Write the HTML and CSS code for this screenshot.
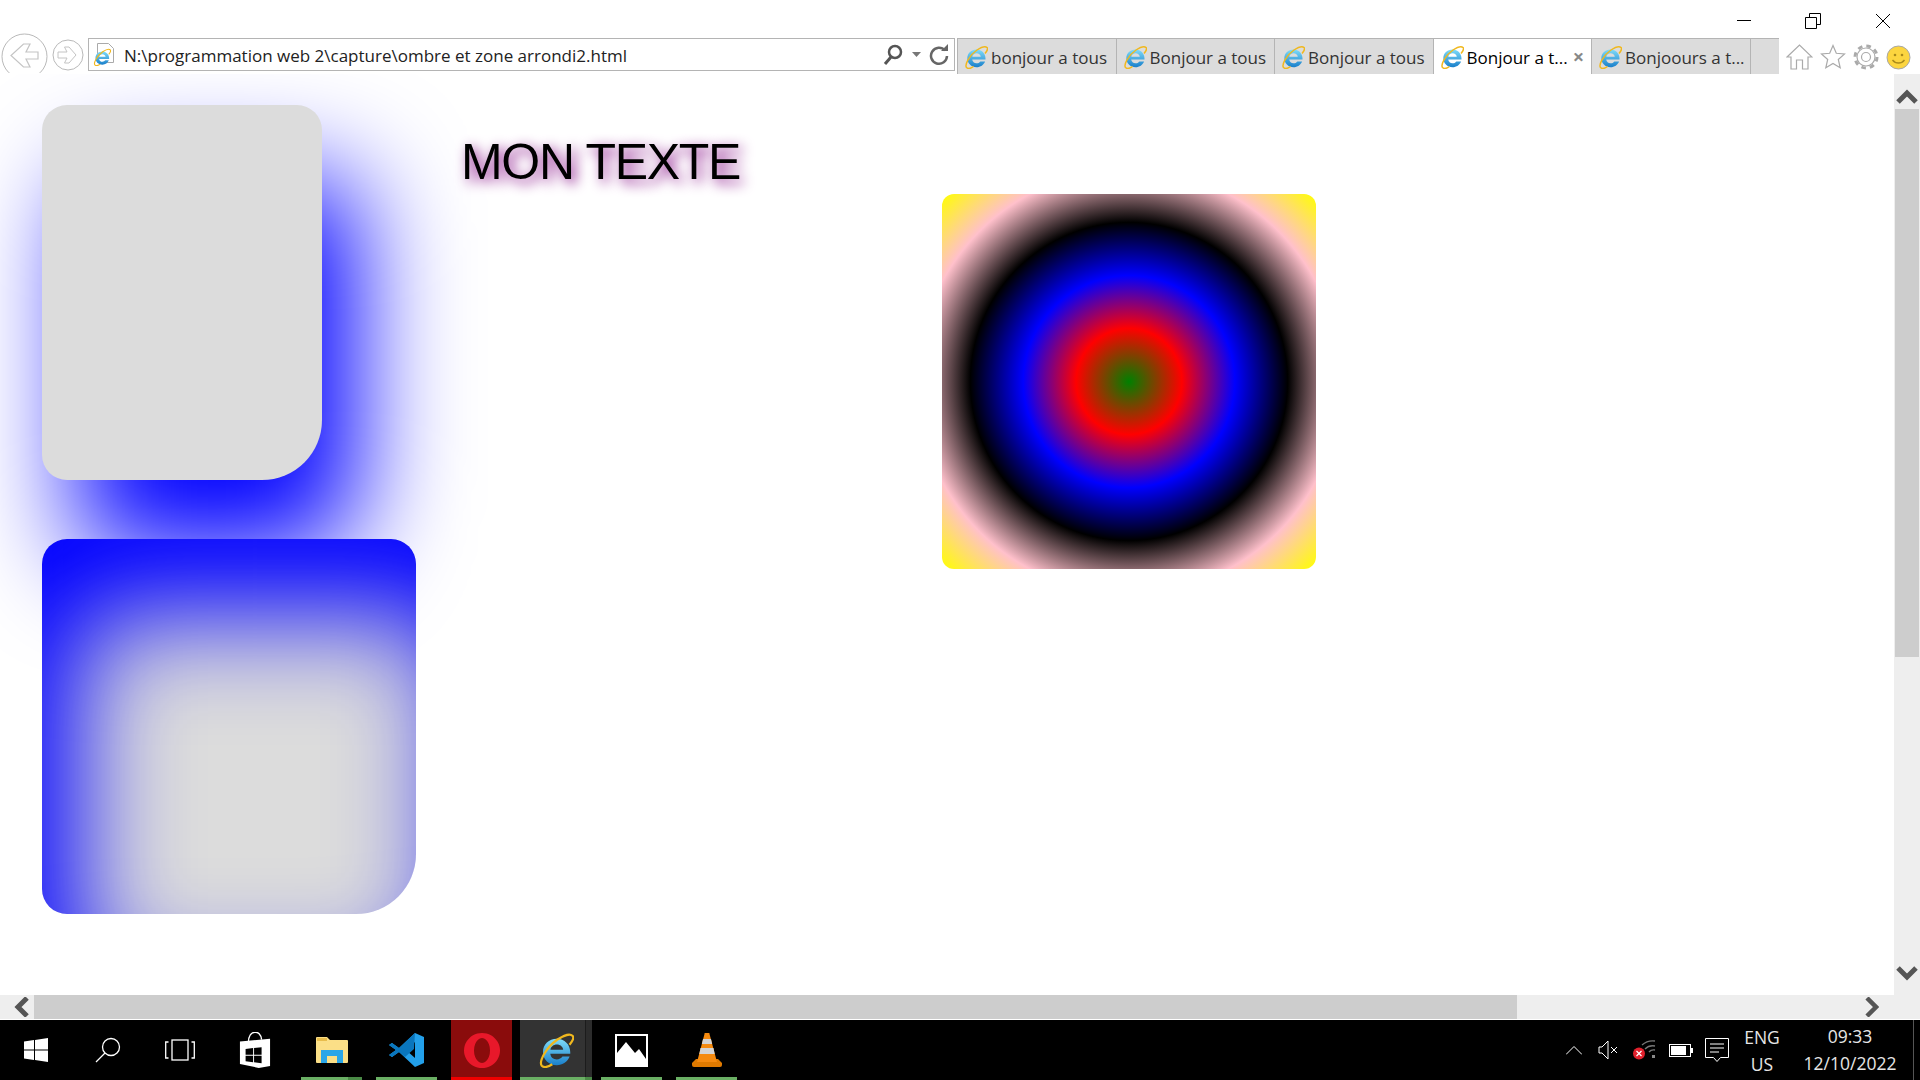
FILE: index.html
```html
<!DOCTYPE html>
<html lang="fr">

<head>
    <meta charset="UTF-8" />
    <title>Bonjour a tous</title>
    <link rel="stylesheet" href="styles.css">
</head>

<body>
    <svg class="defs" width="0" height="0">
        <defs>
            <linearGradient id="ie-blue" x1="0" y1="0" x2="0" y2="1">
                <stop offset="0" stop-color="#7fdcf9" />
                <stop offset="1" stop-color="#1a80cb" />
            </linearGradient>
        </defs>
        <symbol id="ie" viewBox="0 0 24 24">
            <path d="M21.500 14.500H8.200c.3 2.400 2 3.800 4.300 3.800 1.600 0 3-.7 3.800-1.900h4.800c-1.300 3.400-4.600 5.800-8.600 5.800-5.200 0-9.200-3.900-9.200-8.900S7.300 4.500 12.500 4.500s9 3.900 9 9zM8.300 11.800h8.500c-.3-2.100-2-3.500-4.200-3.500s-4 1.400-4.300 3.500z" fill="url(#ie-blue)" fill-rule="evenodd" />
            <path d="M2.500 22.500C.5 20 5 10.500 13 5c4.500-3 8.500-4 10-2.500 1.200 1.200.1 3.500-2 6M2.500 22.500c1.500 1.500 4.500.8 7-1" fill="none" stroke="#f0b81e" stroke-width="1.500" />
        </symbol>
    </svg>

    <header class="window-bar">
        <div class="controls">
            <svg width="14" height="14" viewBox="0 0 14 14"><path d="M0 7.500h14" stroke="#000" /></svg>
            <svg width="16" height="16" viewBox="0 0 16 16"><path d="M.5 4.500h11v11H.500zM4.500 4V.5h11v11H12" fill="none" stroke="#000" /></svg>
            <svg width="16" height="16" viewBox="0 0 16 16"><path d="M1 1l14 14M15 1L1 15" stroke="#000" /></svg>
        </div>
    </header>

    <nav class="toolbar">
        <div class="nav-buttons">
            <svg class="back" width="47" height="47" viewBox="0 0 47 47">
                <circle cx="23.500" cy="23.500" r="22.500" fill="#fff" stroke="#b9b9b9" />
                <path d="M37 19H25l4-8h-6.500L10 22.500 22.500 34H29l-4-8h12z" fill="none" stroke="#c4c4c4" stroke-width="1.200" />
            </svg>
            <svg class="forward" width="32" height="32" viewBox="0 0 32 32">
                <circle cx="16" cy="16" r="15" fill="#fff" stroke="#b9b9b9" />
                <path d="M6 13h9l-2.500-5H17l7 8-7 8h-4.500L15 19H6z" fill="none" stroke="#c4c4c4" />
            </svg>
        </div>
        <div class="address">
            <svg class="page-icon" width="22" height="26" viewBox="0 0 22 26">
                <path d="M4.500 1.500h11l5 5v14h-16z" fill="#fff" stroke="#aaa" />
                <use href="#ie" x="0" y="6" width="18" height="18" />
            </svg>
            <span class="url">N:\programmation web 2\capture\ombre et zone arrondi2.html</span>
            <svg width="22" height="22" viewBox="0 0 22 22"><circle cx="13" cy="8" r="6" fill="none" stroke="#555" stroke-width="2.500" /><path d="M9 13l-6 7" stroke="#555" stroke-width="3" /></svg>
            <svg class="caret" width="9" height="5" viewBox="0 0 9 5"><path d="M0 0h9L4.500 5z" fill="#777" /></svg>
            <svg width="20" height="22" viewBox="0 0 20 22"><path d="M16 6.500a8 8 0 1 0 2 5.500" fill="none" stroke="#666" stroke-width="2.500" /><path d="M12 7h7V0z" fill="#666" /></svg>
        </div>
        <div class="tabs">
            <div class="tab"><svg width="24" height="24"><use href="#ie" /></svg><span>bonjour a tous</span></div>
            <div class="tab"><svg width="24" height="24"><use href="#ie" /></svg><span>Bonjour a tous</span></div>
            <div class="tab"><svg width="24" height="24"><use href="#ie" /></svg><span>Bonjour a tous</span></div>
            <div class="tab active"><svg width="24" height="24"><use href="#ie" /></svg><span>Bonjour a t...</span><b class="tab-close">×</b></div>
            <div class="tab"><svg width="24" height="24"><use href="#ie" /></svg><span>Bonjoours a t...</span></div>
            <div class="tab new-tab"></div>
        </div>
        <div class="tools">
            <svg width="27" height="26" viewBox="0 0 27 26"><path d="M1 13L13.500 1 26 13h-4v12h-5.500v-9h-6v9H5V13z" fill="none" stroke="#aaa" stroke-width="1.200" /></svg>
            <svg width="26" height="26" viewBox="0 0 26 26"><path d="M13 1.500l3.300 7.800 8.200.7-6.200 5.500 1.900 8.300-7.200-4.400-7.200 4.400 1.900-8.300L1.500 10l8.200-.7z" fill="none" stroke="#aaa" stroke-width="1.200" /></svg>
            <svg width="26" height="26" viewBox="0 0 26 26"><circle cx="13" cy="13" r="4.500" fill="none" stroke="#aaa" stroke-width="1.200" /><circle cx="13" cy="13" r="9" fill="none" stroke="#aaa" stroke-width="1.200" /><circle cx="13" cy="13" r="11" fill="none" stroke="#aaa" stroke-width="3" stroke-dasharray="4.600 4.040" /></svg>
            <svg width="25" height="25" viewBox="0 0 25 25"><circle cx="12.500" cy="12.500" r="11.500" fill="#fcd53f" stroke="#a8a8a8" /><circle cx="9" cy="10" r="1.300" fill="#a98a1c" /><circle cx="16" cy="10" r="1.300" fill="#a98a1c" /><path d="M6.500 15c3 4 9 4 12 0" fill="none" stroke="#a98a1c" stroke-width="1.300" /></svg>
        </div>
    </nav>

    <div class="viewport">
        <main class="page">
            <div class="col-boxes">
                <div class="box box-shadow"></div>
                <div class="box box-inset"></div>
            </div>
            <h1 class="title">MON TEXTE</h1>
            <div class="box box-radial"></div>
        </main>
        <aside class="vscroll">
            <svg width="22" height="16" viewBox="0 0 22 16"><path d="M2 14l9-9 9 9" fill="none" stroke="#555" stroke-width="5" /></svg>
            <div class="vscroll-thumb"></div>
            <svg class="vscroll-down" width="22" height="16" viewBox="0 0 22 16"><path d="M2 2l9 9 9-9" fill="none" stroke="#555" stroke-width="5" /></svg>
        </aside>
    </div>

    <div class="hscroll">
        <div class="hscroll-btn"><svg width="17" height="20" viewBox="0 0 17 20"><path d="M14 1L5 10l9 9" fill="none" stroke="#555" stroke-width="5" /></svg></div>
        <div class="hscroll-thumb"></div>
        <div class="hscroll-track"><svg width="14" height="20" viewBox="0 0 14 20"><path d="M2 1l9 9-9 9" fill="none" stroke="#555" stroke-width="4.500" /></svg></div>
    </div>

    <footer class="taskbar">
        <div class="start-items">
            <div class="task"><svg width="24" height="24" viewBox="0 0 24 24"><path d="M0 3.500l10-1.400v9.400H0zM11 2L24 0v11.500H11zM0 12.500h10v9.400L0 20.500zM11 12.500h13V24l-13-2z" fill="#fff" /></svg></div>
            <div class="task"><svg width="26" height="26" viewBox="0 0 26 26"><circle cx="16" cy="10" r="8.500" fill="none" stroke="#fff" stroke-width="1.300" /><path d="M10 16l-9 9" stroke="#fff" stroke-width="1.300" /></svg></div>
            <div class="task"><svg width="30" height="22" viewBox="0 0 30 22"><rect x="7" y="1" width="16" height="20" fill="none" stroke="#fff" stroke-width="1.300" /><path d="M3.500 3H.7v16h2.800M26.500 3h2.800v16h-2.800" fill="none" stroke="#fff" stroke-width="1.300" /></svg></div>
            <div class="task store"><svg width="32" height="36" viewBox="0 0 34 38"><path d="M1 10l32-3v29L21 38 1 34z" fill="#fff" /><path d="M10 11c0-14 13-14 14-3" fill="none" stroke="#fff" stroke-width="1.500" /><path d="M7 18l8-1v7H7zM16 17l8-1v8h-8zM7 25h8v7l-8-1zM16 25h8v8l-8-1z" fill="#000" /></svg></div>
            <div class="task running stacked folder"><svg width="32" height="26" viewBox="0 0 32 26"><path d="M0 1a1 1 0 0 1 1-1h10l3 3h17a1 1 0 0 1 1 1v21a1 1 0 0 1-1 1H1a1 1 0 0 1-1-1z" fill="#fbdf87" /><path d="M1 1h10v3H1z" fill="#e8bd4c" /><path d="M5 26V13h22v13h-6v-7h-10v7z" fill="#2aa6e8" /></svg></div>
            <div class="task running"><svg width="36" height="36" viewBox="0 0 36 36"><path d="M26 1l9 4v26l-9 4L10 20l-7 5-3-2 7-5-7-5 3-2 7 5zM26 10l-9 8 9 8z" fill="#23a0ea" fill-rule="evenodd" /><path d="M26 1L10 16l-7-5-3 2 7 5-7 5 3 2 7-5 6 5 9-8z" fill="#0a76bd" /></svg></div>
            <div class="task opera"><svg width="36" height="35" viewBox="0 0 36 35"><path d="M18 0a18 17.500 0 1 0 .01 0zM18 5a8 12.500 0 1 0 .01 0z" fill="#e8182a" fill-rule="evenodd" /></svg></div>
            <div class="task ie-active stacked"><svg width="36" height="36"><use href="#ie" /></svg></div>
            <div class="task running"><svg width="33" height="33" viewBox="0 0 33 33"><rect width="33" height="33" fill="#fff" /><path d="M2 2h29v23l-7-10-4 4-9-11-9 11z" fill="#000" /></svg></div>
            <div class="task running"><svg width="30" height="34" viewBox="0 0 30 34"><path d="M0 30l4-4h22l4 4v2a2 2 0 0 1-2 2H2a2 2 0 0 1-2-2z" fill="#e07a00" /><path d="M12.500 1a2.500 2.500 0 0 1 5 0L25 29H5z" fill="#f58a0f" /><path d="M11 6h8l1.200 5h-10.400zM8.500 15h13l1.200 6H7.300z" fill="#d4d4d4" /></svg></div>
        </div>
        <div class="tray">
            <svg width="16" height="10" viewBox="0 0 16 10"><path d="M0 9.500l8-8 8 8" fill="none" stroke="#fff" /></svg>
            <svg class="tray-sound" width="21" height="20" viewBox="0 0 21 20"><path d="M1 7v6h3l6 6V1L4 7zM13 7l6 6M19 7l-6 6" fill="none" stroke="#fff" /></svg>
            <svg class="tray-net" width="24" height="20" viewBox="0 0 24 20"><path d="M9 5a16 16 0 0 1 13-4M12 9a11 11 0 0 1 10-3M16 12a6 6 0 0 1 6-2" fill="none" stroke="#777" stroke-width="1.300" /><rect x="19" y="15" width="3" height="3" fill="#888" /><circle cx="6" cy="13.500" r="6" fill="#e0202c" /><path d="M3.500 11l5 5M8.500 11l-5 5" stroke="#fff" stroke-width="1.200" /></svg>
            <svg class="tray-bat" width="24" height="13" viewBox="0 0 24 13"><rect x=".5" y=".5" width="21" height="12" fill="none" stroke="#fff" /><rect x="2" y="2" width="15" height="9" fill="#fff" /><rect x="22" y="4" width="2" height="5" fill="#fff" /></svg>
            <svg class="tray-msg" width="24" height="25" viewBox="0 0 24 25"><path d="M.5.500h23v19h-8l-3.500 4-3.500-4h-8zM5 6h14M5 10h14M5 14h9" fill="none" stroke="#fff" /></svg>
            <div class="lang"><span>ENG</span><span>US</span></div>
            <div class="clock"><span>09:33</span><span>12/10/2022</span></div>
            <div class="show-desktop"></div>
        </div>
    </footer>
</body>

</html>
```

FILE: styles.css
```css
* {
    box-sizing: border-box;
}

html,
body {
    margin: 0;
    height: 100%;
}

body {
    width: 1920px;
    height: 1080px;
    overflow: hidden;
    display: flex;
    flex-direction: column;
    background: #fff;
    font-family: "Open Sans", "Noto Sans", sans-serif;
    color: #222;
}

.defs {
    position: absolute;
}

/* barre de titre */
.window-bar {
    height: 38px;
    flex: none;
    display: flex;
    justify-content: flex-end;
}

.controls {
    display: flex;
    align-items: flex-start;
    padding-top: 13px;
    padding-right: 29px;
    gap: 54px;
}

/* barre d'adresse et onglets */
.toolbar {
    height: 36px;
    flex: none;
    display: flex;
    align-items: flex-start;
}

.nav-buttons {
    width: 88px;
    height: 40px;
    flex: none;
    margin-top: -5px;
    display: flex;
    align-items: flex-start;
    overflow: hidden;
}

.back {
    flex: none;
    margin-left: 1px;
}

.forward {
    flex: none;
    margin: 6px 0 0 4px;
}

.address {
    width: 867px;
    height: 33px;
    flex: none;
    display: flex;
    align-items: center;
    padding: 0 5px 0 4px;
    border: 1px solid #b4b4b4;
}

.page-icon {
    margin-right: 9px;
}

.url {
    flex: 1;
    padding-top: 2px;
    font-size: 17px;
    white-space: nowrap;
}

.caret {
    margin: 0 8px 0 8px;
}

.tabs {
    width: 822px;
    height: 36px;
    flex: none;
    margin-left: 2px;
    display: flex;
    background: #dcdcdc;
    border-top: 1px solid #b4b4b4;
    border-left: 1px solid #b4b4b4;
}

.tab {
    width: 158.500px;
    flex: none;
    display: flex;
    align-items: center;
    gap: 3px;
    padding-left: 6px;
    border-right: 1px solid #b4b4b4;
    font-size: 17px;
    white-space: nowrap;
    color: #333;
}

.tab span {
    padding-top: 1px;
}

.tab.active {
    background: #fff;
    color: #000;
}

.tab.new-tab {
    width: 27px;
    border-right: none;
}

.tab-close {
    margin-left: 2px;
    font-size: 20px;
    color: #888;
}

.tools {
    flex: 1;
    display: flex;
    align-items: center;
    gap: 7px;
    padding: 6px 0 0 7px;
}

/* zone de la page */
.viewport {
    height: 921px;
    flex: none;
    display: flex;
}

.page {
    flex: 1;
    min-width: 0;
    overflow: hidden;
    display: flex;
    align-items: flex-start;
    padding: 31px 0 0 42px;
}

.col-boxes {
    width: 374px;
    flex: none;
}

.box {
    height: 375px;
    border-radius: 25px 25px 60px 25px;
    background: #dcdcdc;
}

.box-shadow {
    width: 280px;
    box-shadow: 35px 75px 110px #0000ff;
}

.box-inset {
    width: 374px;
    margin-top: 59px;
    box-shadow: inset 35px 75px 110px #0000ff;
}

.title {
    margin: 30px 0 0 45px;
    width: 481px;
    flex: none;
    font-family: "Liberation Sans", Arial, sans-serif;
    font-size: 50px;
    font-weight: 400;
    letter-spacing: -1.300px;
    line-height: 55px;
    color: #000;
    text-shadow: 4px 4px 13px purple;
}

.box-radial {
    width: 374px;
    height: 375px;
    flex: none;
    margin-top: 89px;
    border-radius: 12px;
    background: radial-gradient(green, red, blue, black, pink, yellow);
}

.vscroll {
    width: 26px;
    flex: none;
    display: flex;
    flex-direction: column;
    align-items: center;
    padding-top: 14px;
    background: #eee;
}

.vscroll-thumb {
    width: 24px;
    height: 548px;
    flex: none;
    margin-top: 5px;
    background: #cdcdcd;
}

.vscroll-down {
    margin-top: auto;
    margin-bottom: 13px;
}

.hscroll {
    height: 24px;
    flex: none;
    display: flex;
    background: #eee;
}

.hscroll-btn {
    width: 34px;
    flex: none;
    display: flex;
    align-items: center;
    justify-content: flex-end;
    padding-right: 4px;
}

.hscroll-thumb {
    width: 1483px;
    flex: none;
    background: #cdcdcd;
}

.hscroll-track {
    flex: 1;
    display: flex;
    align-items: center;
    justify-content: flex-end;
    padding-right: 41px;
}

/* barre des taches */
.taskbar {
    height: 60px;
    flex: none;
    margin-top: 1px;
    display: flex;
    justify-content: space-between;
    background: #000;
    color: #e6e6e6;
}

.start-items {
    display: flex;
}

.task {
    width: 72px;
    flex: none;
    display: flex;
    align-items: center;
    justify-content: center;
    position: relative;
}

.task.store {
    margin-left: 3px;
}

.task.running,
.task.opera {
    width: 61px;
    margin-right: 14px;
}

.task.folder {
    margin-left: 10px;
}

.task.running::after,
.task.ie-active::after,
.task.opera::after {
    content: "";
    position: absolute;
    left: 0;
    right: 0;
    bottom: 0;
    height: 3px;
    background: #6aaf64;
}

.task.stacked::before {
    content: "";
    position: absolute;
    right: 0;
    bottom: 0;
    z-index: 1;
    width: 7px;
    height: 3px;
    background: #4a8a46;
}

.task.folder::before {
    width: 14px;
}

.task.opera {
    margin-right: 8px;
    background: #8a0c0c;
}

.task.opera::after {
    background: #f00000;
}

.task.ie-active {
    margin-right: 9px;
    background: linear-gradient(to right, #333 0, #333 65px, #1c1c1c 65px, #1c1c1c 66px, #2c2c2c 66px);
}

.tray {
    display: flex;
    align-items: center;
}

.tray-sound {
    margin-left: 16px;
}

.tray-net {
    margin-left: 14px;
}

.tray-bat {
    margin-left: 12px;
}

.tray-msg {
    margin-left: 12px;
}

.lang,
.clock {
    display: flex;
    flex-direction: column;
    align-items: center;
    font-size: 17.500px;
    line-height: 27px;
    white-space: nowrap;
}

.lang {
    margin-left: 13px;
    padding-top: 1px;
    width: 40px;
}

.clock {
    margin-left: 21px;
    width: 94px;
}

.show-desktop {
    width: 1px;
    height: 100%;
    margin-left: 16px;
    margin-right: 6px;
    background: #555;
}
```
